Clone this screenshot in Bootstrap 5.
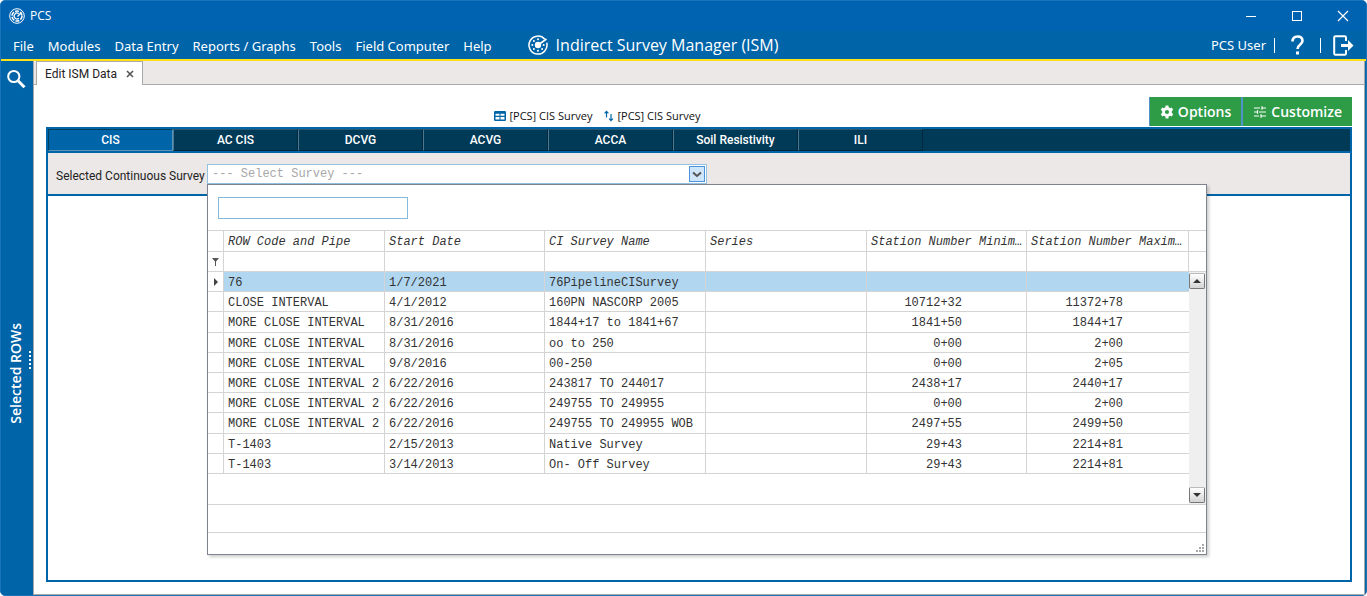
<!DOCTYPE html>
<html lang="en">
<head>
<meta charset="utf-8">
<meta name="viewport" content="width=device-width, initial-scale=1">
<title>PCS</title>
<link href="https://cdn.jsdelivr.net/npm/bootstrap@5.3.0/dist/css/bootstrap.min.css" rel="stylesheet">
<style>
  :root { --pcs-blue: #0064a8; --pcs-navy: #003a57; --pcs-haze: #ece8e7; --pcs-line: #d4d4d4; }
  body { font-family: "Open Sans", "Noto Sans", sans-serif; font-size: 14px; line-height: 20px; color: #222; background: #fff; }
  button { color: inherit; }
  svg { display: block; flex: none; }
  .app-window { background: var(--pcs-blue); border: 1px solid #1a72b8; border-radius: 5px; overflow: hidden; }
  .title-strip { height: 30px; background: #0063b1; font-size: 12px; padding-left: 8px; gap: 5px; }
  .win-btn { width: 46px; height: 30px; border: 0; background: none; padding: 0; display: flex; align-items: center; justify-content: center; }
  .menu-strip { height: 30px; border-bottom: 2px solid #ffe11a; padding: 0 12px; }
  .menu-strip a { color: #fff; text-decoration: none; font-family: "Noto Sans", sans-serif; font-size: 13px; line-height: 22px; }
  .menu-list { gap: 14px; padding-top: 2px; }
  .module-name { font-size: 16px; margin: 0 0 0 36px; font-weight: 400; gap: 8px; line-height: 20px; }
  .user-tools button { background: none; border: 0; padding: 0; }
  .user-tools .bar { width: 1px; height: 15px; background: #fff; }
  .side-rail { width: 32px; flex: none; color: #fff; position: relative; }
  .side-rail button { background: none; border: 0; padding: 0; }
  .find-btn { margin: 8px 0 0 5px; }
  .rows-btn { writing-mode: vertical-rl; transform: rotate(180deg); font-weight: 600; font-size: 14px; line-height: 20px; margin: auto auto 171px 5px; }
  .grip { position: absolute; right: 2px; top: 290px; width: 2px; height: 19px; background: repeating-linear-gradient(#fff 0 2px, transparent 2px 4px); }
  .workspace { background: #fff; border-left: 1px solid #a9a9a9; border-right: 1px solid #a9a9a9; border-bottom: 1px solid #a9a9a9; margin-right: 1px; min-width: 0; }
  .doc-tabs { height: 24px; background: var(--pcs-haze); border-bottom: 1px solid #a9a9a9; padding-left: 2px; }
  .doc-tab { height: 24px; background: #fff; border: 1px solid #a9a9a9; border-bottom: 0; padding: 0 8px; gap: 9px; }
  .compact { font-family: Roboto, sans-serif; font-size: 12px; }
  .doc-tab button { border: 0; background: none; padding: 0; }
  .tool-row { padding: 12px 12px 0 12px; height: 42px; }
  .survey-links { gap: 12px; font-size: 11px; padding-top: 9px; line-height: 20px; }
  .survey-links a { color: #111; text-decoration: none; display: flex; align-items: center; gap: 3px; }
  .green-btn { background: #2e9b47; color: #fff; border: 0; border-left: 1px solid #4f93c8; height: 29px; padding: 0 10px; border-radius: 0; font-size: 14px; font-weight: 600; display: flex; align-items: center; gap: 4px; line-height: 20px; }
  .green-btn + .green-btn { border-left-width: 2px; }
  .survey-panel { border: 2px solid var(--pcs-blue); margin: 0 12px 12px 12px; }
  .survey-tabs { background: var(--pcs-navy); border-bottom: 2px solid var(--pcs-blue); height: 24px; }
  .survey-tabs button { width: 125px; height: 22px; padding: 0; border: 1px solid #00283f; border-left-color: #4d7890; border-top-color: #29566f; border-radius: 0; background: var(--pcs-navy); color: #fff; font-weight: 500; line-height: 20px; }
  .survey-tabs button.active { background: var(--pcs-blue); border-color: #00405f #5c93b8 #5c93b8 #00405f; }
  .pick-row { height: 43px; background: var(--pcs-haze); border-bottom: 2px solid var(--pcs-blue); padding: 11px 8px 0 8px; }
  .pick-row label { width: 151px; line-height: 24px; white-space: nowrap; }
  .pick-box { position: relative; width: 500px; height: 20px; background: #fff; border: 1px solid #92c1e2; }
  .pick-box select { appearance: none; border: 0; background: none; padding: 0 4px; color: #a8a8a8; line-height: 18px; outline: 0; }
  .mono { font-family: "Liberation Mono", monospace; font-size: 12px; }
  .pick-open { width: 16px; height: 16px; margin: 1px; padding: 0; border: 1px solid #4a94dc; background: #cfe5fa; display: flex; align-items: center; justify-content: center; }
  .lookup { position: absolute; z-index: 5; top: 19px; left: -1px; width: 1000px; background: #fff; border: 1px solid #7f828f; box-shadow: 2px 2px 3px rgba(0,0,0,.2); color: #333; }
  .lookup-find { display: block; width: 190px; height: 22px; margin: 12px 0 11px 10px; border: 1px solid #84b9dc; padding: 0 4px; outline: 0; }
  .lookup-grid { border-bottom: 1px solid var(--pcs-line); height: 275px; }
  .grid-table { table-layout: fixed; width: 981px; height: 244px; border-collapse: separate; border-spacing: 0; border-top: 1px solid var(--pcs-line); line-height: 16px; }
  .grid-table th, .grid-table td { height: 20px; padding: 3px 2px 0 4px; border-right: 1px solid var(--pcs-line); border-bottom: 1px solid var(--pcs-line); white-space: nowrap; overflow: hidden; text-overflow: ellipsis; vertical-align: middle; }
  .grid-table th { font-weight: 400; font-style: italic; height: 21px; padding-top: 2px; }
  .grid-table td svg { margin-bottom: 2px; }
  .grid-table tbody td:last-child { border-right: 0; }
  .grid-table td.num { text-align: right; padding-right: 64px; }
  .grid-table td.num:last-child { padding-right: 66px; }
  .grid-table tr.picked td + td { background: #b0d6f0; }
  .gutter { border-top: 1px solid var(--pcs-line); width: 17px; }
  .gutter-cell { border-bottom: 1px solid var(--pcs-line); height: 20px; }
  .gutter-cell:first-child { height: 21px; }
  .scroll-track { background: #efefef; padding: 1px 1px 1px 0; }
  .scroll-track button { width: 16px; height: 16px; padding: 0; border: 1px solid #777; border-top-color: #bbb; border-radius: 2px; background: linear-gradient(#fff, #d4d4d4); display: flex; align-items: center; justify-content: center; }
  .lookup-status { height: 28px; border-bottom: 1px solid var(--pcs-line); }
  .lookup-foot { height: 21px; padding: 0 2px 2px 0; }
</style>
</head>
<body>
<div class="app-window d-flex flex-column min-vh-100">
  <header class="text-white">
    <div class="title-strip d-flex align-items-center">
      <svg width="16" height="16" viewBox="0 0 16 16" fill="none" stroke="#fff"><circle cx="8" cy="8" r="7.300" stroke-width="1"/><circle cx="8" cy="8" r="5" stroke-width="1.600" stroke-dasharray="4 1.236"/><path d="M9.800 5.700A2.900 2.900 0 1 0 9.800 10.300M8.500 8.500l4-4" stroke-width="1.200"/></svg>
      <span>PCS</span>
      <div class="d-flex ms-auto">
        <button class="win-btn" aria-label="Minimize"><svg width="12" height="12"><path d="M1 6.500h10" stroke="#fff"/></svg></button>
        <button class="win-btn" aria-label="Maximize"><svg width="12" height="12"><rect x="1.500" y="1.500" width="9" height="9" fill="none" stroke="#fff"/></svg></button>
        <button class="win-btn" aria-label="Close"><svg width="12" height="12"><path d="M1 1l10 10M11 1L1 11" stroke="#fff" stroke-width="1.200"/></svg></button>
      </div>
    </div>
    <div class="menu-strip d-flex align-items-center">
      <nav class="menu-list d-flex">
        <a href="#">File</a><a href="#">Modules</a><a href="#">Data Entry</a><a href="#">Reports / Graphs</a><a href="#">Tools</a><a href="#">Field Computer</a><a href="#">Help</a>
      </nav>
      <h1 class="module-name d-flex align-items-center">
        <svg width="20" height="20" viewBox="0 0 20 20" fill="none" stroke="#fff"><path d="M16.800 4.200A9 9 0 1 0 18.700 7.800" stroke-width="1.500"/><circle cx="10" cy="10" r="3.200" fill="#fff" stroke="none"/><path d="M10 10l8.500-6" stroke-width="1.600"/><g fill="#fff" stroke="none"><circle cx="10" cy="4.300" r="1"/><circle cx="5.900" cy="5.900" r="1"/><circle cx="4.300" cy="10" r="1"/><circle cx="5.900" cy="14.100" r="1"/><circle cx="10" cy="15.700" r="1"/><circle cx="14.100" cy="14.100" r="1"/><circle cx="15.700" cy="10" r="1"/></g></svg>
        Indirect Survey Manager (ISM)
      </h1>
      <div class="user-tools d-flex align-items-center ms-auto">
        <a href="#">PCS User</a>
        <span class="bar mx-2"></span>
        <button class="ms-2" aria-label="Help"><svg width="13" height="20" viewBox="0 0 13 20" fill="none"><path d="M1.500 6.500C1.500 3 3.500 1.500 6.500 1.500s5 1.500 5 4.500C11.500 9.500 6.500 9.500 6.500 14" stroke="#fff" stroke-width="2.600"/><rect x="5" y="16.500" width="3" height="3" fill="#fff"/></svg></button>
        <span class="bar ms-3 me-2"></span>
        <button class="ms-1" aria-label="Sign out"><svg width="21" height="21" viewBox="0 0 21 21" fill="none"><path d="M13 6V2.500Q13 1.200 11.700 1.200H2.500Q1.200 1.200 1.200 2.500v16q0 1.300 1.300 1.300h9.200q1.300 0 1.300-1.300V15" stroke="#fff" stroke-width="2"/><path d="M8 9h7V5l5.500 5.500L15 16v-4H8z" fill="#fff"/></svg></button>
      </div>
    </div>
  </header>

  <div class="d-flex flex-grow-1">
    <aside class="side-rail d-flex flex-column align-items-start">
      <button class="find-btn" aria-label="Search"><svg width="20" height="20" viewBox="0 0 20 20" fill="none" stroke="#fff"><circle cx="7.800" cy="7.500" r="5.600" stroke-width="2"/><path d="M12 11.800l6.500 6.500" stroke-width="3"/></svg></button>
      <button class="rows-btn">Selected ROWs</button>
      <span class="grip"></span>
    </aside>

    <main class="workspace flex-grow-1 d-flex flex-column">
      <div class="doc-tabs">
        <div class="doc-tab compact d-inline-flex align-items-center">Edit ISM Data
          <button aria-label="Close tab"><svg width="8" height="8"><path d="M1 1l6 6M7 1L1 7" stroke="#555" stroke-width="1.600"/></svg></button>
        </div>
      </div>

      <div class="tool-row d-flex">
        <div class="survey-links flex-grow-1 d-flex justify-content-center align-items-start">
          <a href="#"><svg width="12" height="10" viewBox="0 0 12 10"><rect width="12" height="10" rx="1.200" fill="#0064a8"/><path d="M1.500 2.800h4v2h-4zM6.500 2.800h4v2h-4zM1.500 6h4v2.500h-4zM6.500 6h4v2.500h-4z" fill="#fff"/></svg>[PCS] CIS Survey</a>
          <a href="#"><svg width="10" height="12" viewBox="0 0 10 12" fill="none" stroke="#0064a8" stroke-width="1.200"><path d="M2.500 7.500v-6M.6 3.300l1.900-1.900 1.900 1.900M7 4v6.500M5.100 8.700L7 10.600l1.900-1.900"/></svg>[PCS] CIS Survey</a>
        </div>
        <button class="green-btn"><svg width="14" height="14" viewBox="0 0 14 14"><circle cx="7" cy="7" r="3.500" fill="none" stroke="#fff" stroke-width="2.800"/><path d="M7 .6v2.200M7 11.200v2.200M1.500 3.800l1.900 1.100M10.600 9.100l1.900 1.100M1.500 10.200l1.900-1.100M10.600 4.900l1.900-1.100" stroke="#fff" stroke-width="3"/></svg>Options</button>
        <button class="green-btn"><svg width="14" height="12" viewBox="0 0 14 12" stroke="#fff" stroke-width="1.200"><path d="M1 2h6M9 2h4M9 .2v3.600M1 6h3M6 6h7M4.500 4.200v3.600M1 10h5M8 10h5M8 8.200v3.600"/></svg>Customize</button>
      </div>

      <section class="survey-panel flex-grow-1">
        <div class="survey-tabs d-flex" role="tablist">
          <button class="compact active" role="tab">CIS</button><button class="compact" role="tab">AC CIS</button><button class="compact" role="tab">DCVG</button><button class="compact" role="tab">ACVG</button><button class="compact" role="tab">ACCA</button><button class="compact" role="tab">Soil Resistivity</button><button class="compact" role="tab">ILI</button>
        </div>
        <div class="pick-row d-flex">
          <label class="compact" for="survey">Selected Continuous Survey</label>
          <div class="pick-box d-flex">
            <select id="survey" class="mono flex-grow-1"><option>--- Select Survey ---</option></select>
            <button class="pick-open" aria-label="Open list"><svg width="10" height="7"><path d="M1 1.500l4 3.500 4-3.500" fill="none" stroke="#555" stroke-width="2"/></svg></button>

            <div class="lookup mono">
              <input class="lookup-find" type="text" aria-label="Find survey">
              <div class="lookup-grid d-flex">
                <div>
                  <table class="grid-table">
                    <colgroup><col style="width:16px"><col style="width:161px"><col style="width:160px"><col style="width:161px"><col style="width:161px"><col style="width:160px"><col style="width:162px"></colgroup>
                    <thead>
                      <tr><th></th><th>ROW Code and Pipe</th><th>Start Date</th><th>CI Survey Name</th><th>Series</th><th>Station Number Minim…</th><th>Station Number Maxim…</th></tr>
                      <tr><td><svg width="7" height="8"><path d="M0 0h7L4 3.500V8H3V3.500z" fill="#555"/></svg></td><td></td><td></td><td></td><td></td><td></td><td></td></tr>
                    </thead>
                    <tbody>
                      <tr class="picked"><td><svg width="7" height="8"><path d="M2 0l4 4-4 4z" fill="#444"/></svg></td><td>76</td><td>1/7/2021</td><td>76PipelineCISurvey</td><td></td><td></td><td></td></tr>
                      <tr><td></td><td>CLOSE INTERVAL</td><td>4/1/2012</td><td>160PN NASCORP 2005</td><td></td><td class="num">10712+32</td><td class="num">11372+78</td></tr>
                      <tr><td></td><td>MORE CLOSE INTERVAL</td><td>8/31/2016</td><td>1844+17 to 1841+67</td><td></td><td class="num">1841+50</td><td class="num">1844+17</td></tr>
                      <tr><td></td><td>MORE CLOSE INTERVAL</td><td>8/31/2016</td><td>oo to 250</td><td></td><td class="num">0+00</td><td class="num">2+00</td></tr>
                      <tr><td></td><td>MORE CLOSE INTERVAL</td><td>9/8/2016</td><td>00-250</td><td></td><td class="num">0+00</td><td class="num">2+05</td></tr>
                      <tr><td></td><td>MORE CLOSE INTERVAL 2</td><td>6/22/2016</td><td>243817 TO 244017</td><td></td><td class="num">2438+17</td><td class="num">2440+17</td></tr>
                      <tr><td></td><td>MORE CLOSE INTERVAL 2</td><td>6/22/2016</td><td>249755 TO 249955</td><td></td><td class="num">0+00</td><td class="num">2+00</td></tr>
                      <tr><td></td><td>MORE CLOSE INTERVAL 2</td><td>6/22/2016</td><td>249755 TO 249955 WOB</td><td></td><td class="num">2497+55</td><td class="num">2499+50</td></tr>
                      <tr><td></td><td>T-1403</td><td>2/15/2013</td><td>Native Survey</td><td></td><td class="num">29+43</td><td class="num">2214+81</td></tr>
                      <tr><td></td><td>T-1403</td><td>3/14/2013</td><td>On- Off Survey</td><td></td><td class="num">29+43</td><td class="num">2214+81</td></tr>
                    </tbody>
                  </table>
                </div>
                <div class="gutter d-flex flex-column">
                  <div class="gutter-cell"></div>
                  <div class="gutter-cell"></div>
                  <div class="scroll-track flex-grow-1 d-flex flex-column justify-content-between">
                    <button aria-label="Scroll up"><svg width="8" height="4"><path d="M0 4l4-4 4 4z" fill="#333"/></svg></button>
                    <button aria-label="Scroll down"><svg width="8" height="4"><path d="M0 0l4 4 4-4z" fill="#333"/></svg></button>
                  </div>
                </div>
              </div>
              <div class="lookup-status"></div>
              <div class="lookup-foot d-flex justify-content-end align-items-end"><svg width="8" height="8" fill="#a8a8a8"><path d="M6 0h2v2H6zM3 3h2v2H3zM6 3h2v2H6zM0 6h2v2H0zM3 6h2v2H3zM6 6h2v2H6z"/></svg></div>
            </div>
          </div>
        </div>
      </section>
    </main>
  </div>
</div>
<script src="https://cdn.jsdelivr.net/npm/bootstrap@5.3.0/dist/js/bootstrap.bundle.min.js"></script>
</body>
</html>
